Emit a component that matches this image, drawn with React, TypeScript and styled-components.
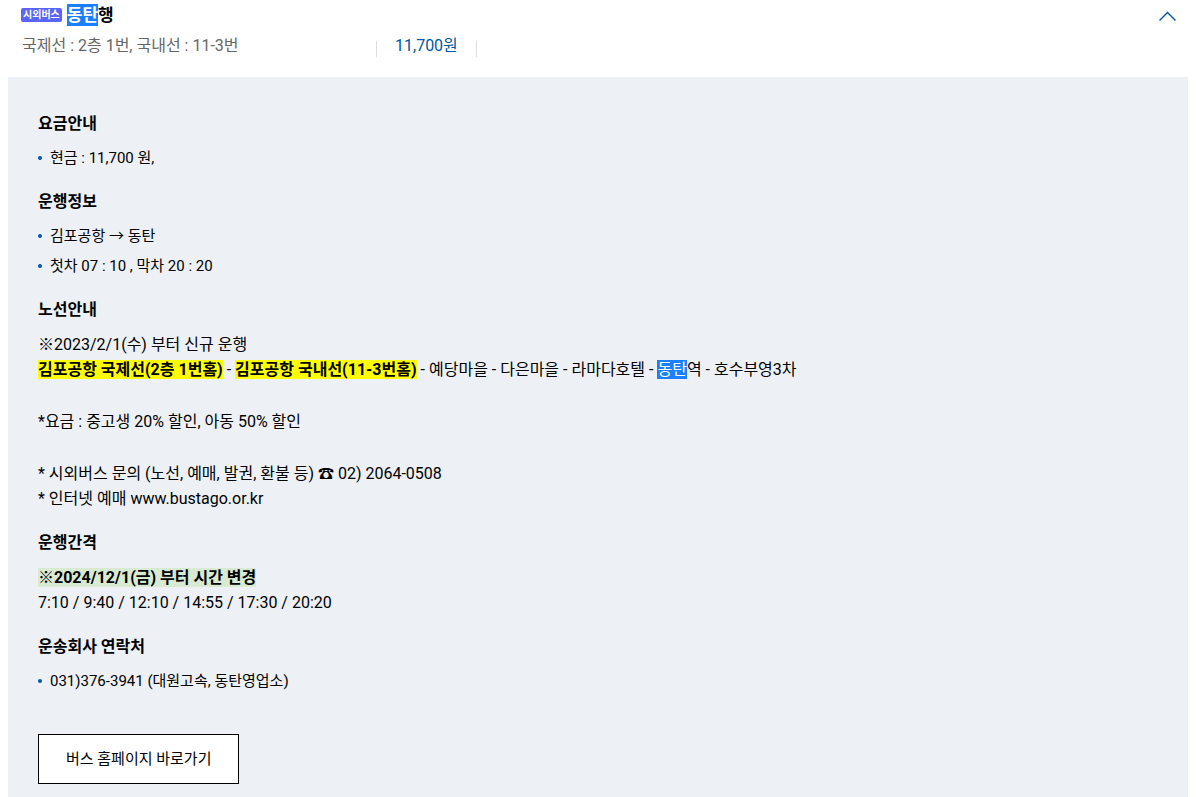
import React, { useState } from 'react';
import styled, { createGlobalStyle } from 'styled-components';

const GlobalStyle = createGlobalStyle`
  *, *::before, *::after { box-sizing: border-box; }
  body {
    margin: 0 8px;
    background: #fff;
    color: #000;
    font-family: Roboto, "Noto Sans CJK KR", sans-serif;
    font-size: 16px;
    line-height: 26px;
  }
  h2, h3, p, ul { margin: 0; padding: 0; }
`;

const Header = styled.header`
  display: flex;
  justify-content: space-between;
  align-items: flex-start;
  padding: 2px 4px 18px 13px;
`;

const Summary = styled.div`
  flex: 1;
`;

const TitleRow = styled.div`
  display: flex;
  align-items: center;
  gap: 5px;
`;

const Badge = styled.span`
  padding: 0 2px;
  border-radius: 2px;
  background: #5a65f8;
  color: #fff;
  font-size: 10px;
  font-weight: 700;
  line-height: 14px;
`;

const Title = styled.h2`
  font-size: 17px;
  font-weight: 700;
  line-height: 26px;
`;

const Mark = styled.mark<{ $tone: 'found' | 'stop' | 'notice' }>`
  color: ${({ $tone }) => ($tone === 'found' ? '#fff' : 'inherit')};
  background: ${({ $tone }) =>
    ({ found: '#1a80ff', stop: '#ffff00', notice: '#d9ead3' })[$tone]};
  font-weight: ${({ $tone }) => ($tone === 'found' ? 'inherit' : 700)};
`;

const TitleMark = styled(Mark)`
  padding: 1px 0;
`;

const InfoRow = styled.div`
  display: flex;
  align-items: center;
  padding-top: 5px;
`;

const Platform = styled.p`
  flex: 0 0 355px;
  padding-left: 1px;
  color: #666;
`;

const Fare = styled.p`
  display: flex;
  align-items: center;
  gap: 18px;
  color: #00569f;

  &::before,
  &::after {
    content: '';
    width: 1px;
    height: 16px;
    margin-top: 5px;
    background: #ddd;
  }
`;

const ToggleButton = styled.button`
  display: flex;
  padding: 8px;
  border: 0;
  background: none;
  cursor: pointer;

  svg { transform: ${({ 'aria-expanded': open }) => (open ? 'none' : 'rotate(180deg)')}; }
`;

const Panel = styled.section`
  display: flex;
  flex-direction: column;
  gap: 16px;
  padding: 34px 30px 13px;
  background: #edf1f6;
`;

const Heading = styled.h3`
  margin-bottom: 6px;
  font-size: 16px;
  font-weight: 700;
  line-height: 26px;
`;

const List = styled.ul`
  list-style: none;
`;

const Item = styled.li`
  display: flex;
  align-items: center;
  gap: 8px;
  font-size: 15px;
  line-height: 30px;

  &::before {
    content: '';
    width: 4px;
    height: 4px;
    border-radius: 50%;
    background: #00569f;
  }
`;

const Copy = styled.div`
  display: flex;
  flex-direction: column;
  gap: 27px;
  padding: 3px 0;
  line-height: 25px;
`;

const HomeLink = styled.a`
  align-self: flex-start;
  margin-top: 22px;
  padding: 0 27px;
  border: 1px solid #000;
  background: #fff;
  color: #000;
  font-size: 15px;
  line-height: 48px;
  text-decoration: none;
`;

function Section({ title, children }: { title: string; children: React.ReactNode }) {
  return (
    <div>
      <Heading>{title}</Heading>
      {children}
    </div>
  );
}

export default function App() {
  const [open, setOpen] = useState(true);

  return (
    <>
      <GlobalStyle />
      <Header>
        <Summary>
          <TitleRow>
            <Badge>시외버스</Badge>
            <Title><TitleMark $tone="found">동탄</TitleMark>행</Title>
          </TitleRow>
          <InfoRow>
            <Platform>국제선 : 2층 1번, 국내선 : 11-3번</Platform>
            <Fare>11,700원</Fare>
          </InfoRow>
        </Summary>
        <ToggleButton
          type="button"
          aria-label="상세 정보"
          aria-expanded={open}
          onClick={() => setOpen(!open)}
        >
          <svg width="17" height="12" viewBox="0 0 17 12" fill="none" stroke="#00569f" strokeWidth="1.4">
            <path d="M0.5 10.5 8.5 2.5 16.5 10.5" />
          </svg>
        </ToggleButton>
      </Header>
      {open && (
        <Panel>
          <Section title="요금안내">
            <List><Item>현금 : 11,700 원,</Item></List>
          </Section>
          <Section title="운행정보">
            <List>
              <Item>김포공항 → 동탄</Item>
              <Item>첫차 07 : 10 , 막차 20 : 20</Item>
            </List>
          </Section>
          <Section title="노선안내">
            <Copy>
              <p>
                ※2023/2/1(수) 부터 신규 운행<br />
                <Mark $tone="stop">김포공항 국제선(2층 1번홈)</Mark> -{' '}
                <Mark $tone="stop">김포공항 국내선(11-3번홈)</Mark> - 예당마을 - 다은마을 - 라마다호텔 -{' '}
                <Mark $tone="found">동탄</Mark>역 - 호수부영3차
              </p>
              <p>*요금 : 중고생 20% 할인, 아동 50% 할인</p>
              <p>
                * 시외버스 문의 (노선, 예매, 발권, 환불 등) ☎ 02) 2064-0508<br />
                * 인터넷 예매 www.bustago.or.kr
              </p>
            </Copy>
          </Section>
          <Section title="운행간격">
            <Copy>
              <p>
                <Mark $tone="notice">※2024/12/1(금) 부터 시간 변경</Mark><br />
                7:10 / 9:40 / 12:10 / 14:55 / 17:30 / 20:20
              </p>
            </Copy>
          </Section>
          <Section title="운송회사 연락처">
            <List><Item>031)376-3941 (대원고속, 동탄영업소)</Item></List>
          </Section>
          <HomeLink href="#bus-homepage">버스 홈페이지 바로가기</HomeLink>
        </Panel>
      )}
    </>
  );
}
